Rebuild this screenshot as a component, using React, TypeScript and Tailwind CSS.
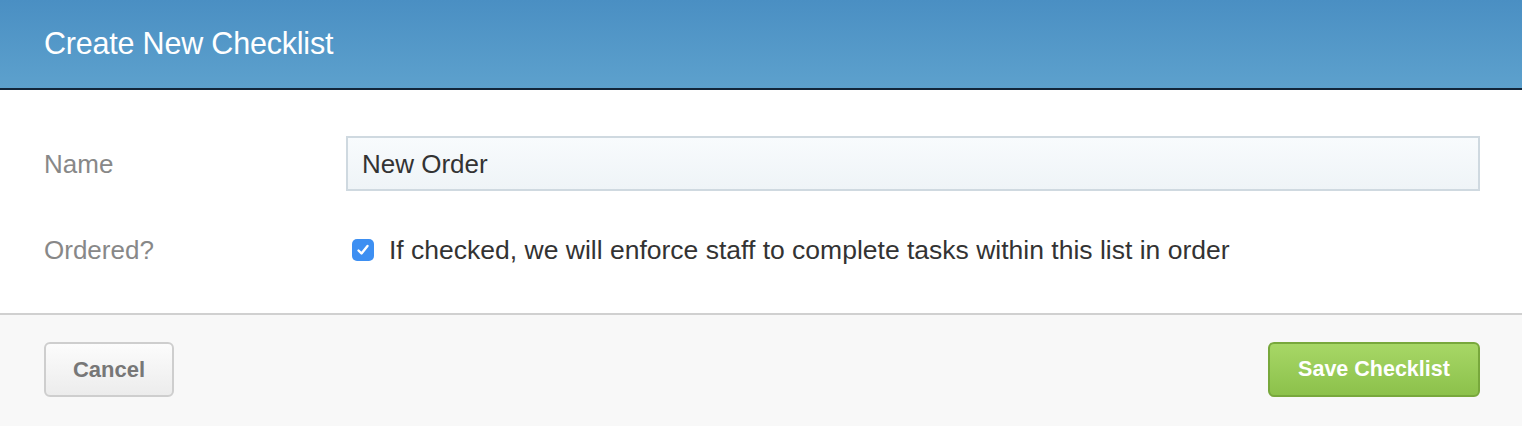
import React from "react";

export default function App() {
  return (
    <div className="w-[1522px] h-[426px] flex flex-col bg-white" style={{ fontFamily: '"Liberation Sans", Arial, sans-serif' }}>
      <div className="h-[88px] shrink-0 bg-gradient-to-b from-[#4a8fc3] to-[#5da1cd] flex items-center px-[44px] border-b-2 border-[#13263a] box-content">
        <h1 className="text-[30.5px] leading-[34px] text-white tracking-[-0.2px] mt-[-2px]">Create New Checklist</h1>
      </div>
      <div className="flex-1 flex flex-col pt-[46px] pl-[44px] pr-[42px]">
        <div className="flex items-center h-[55px]">
          <label className="w-[302px] text-[26px] leading-[30px] text-[#888]">Name</label>
          <div className="flex-1 h-[55px] border-2 border-[#cfd9e0] bg-gradient-to-b from-[#f8fbfd] to-[#eff4f7] flex items-center px-[14px]">
            <span className="text-[26px] leading-[30px] text-[#333]">New Order</span>
          </div>
        </div>
        <div className="flex items-center mt-[44px] h-[30px]">
          <label className="w-[302px] text-[26px] leading-[30px] text-[#888]">Ordered?</label>
          <div className="flex items-center gap-[15px] ml-[6px]">
            <div className="w-[22px] h-[22px] rounded-[5px] bg-[#3d8ff2] flex items-center justify-center">
              <svg width="14" height="14" viewBox="0 0 14 14" fill="none">
                <path d="M2.5 7.5 L5.5 10.5 L11.5 3" stroke="white" strokeWidth="2.4" strokeLinecap="round" strokeLinejoin="round" />
              </svg>
            </div>
            <span className="text-[26.5px] leading-[30px] text-[#333]">If checked, we will enforce staff to complete tasks within this list in order</span>
          </div>
        </div>
      </div>
      <div className="h-[113px] shrink-0 border-t-2 border-[#d0d0d0] bg-[#f8f8f8] flex items-center justify-between px-[44px] pb-[2px] pr-[42px]">
        <button className="w-[130px] h-[55px] rounded-[6px] border-2 border-[#cecece] bg-gradient-to-b from-[#fcfcfc] to-[#ececec] text-[22px] font-bold text-[#777]">Cancel</button>
        <button className="w-[212px] h-[55px] rounded-[6px] border-2 border-[#78a83c] bg-gradient-to-b from-[#a7d766] to-[#8cc14b] text-[21.5px] font-bold text-white">Save Checklist</button>
      </div>
    </div>
  );
}
